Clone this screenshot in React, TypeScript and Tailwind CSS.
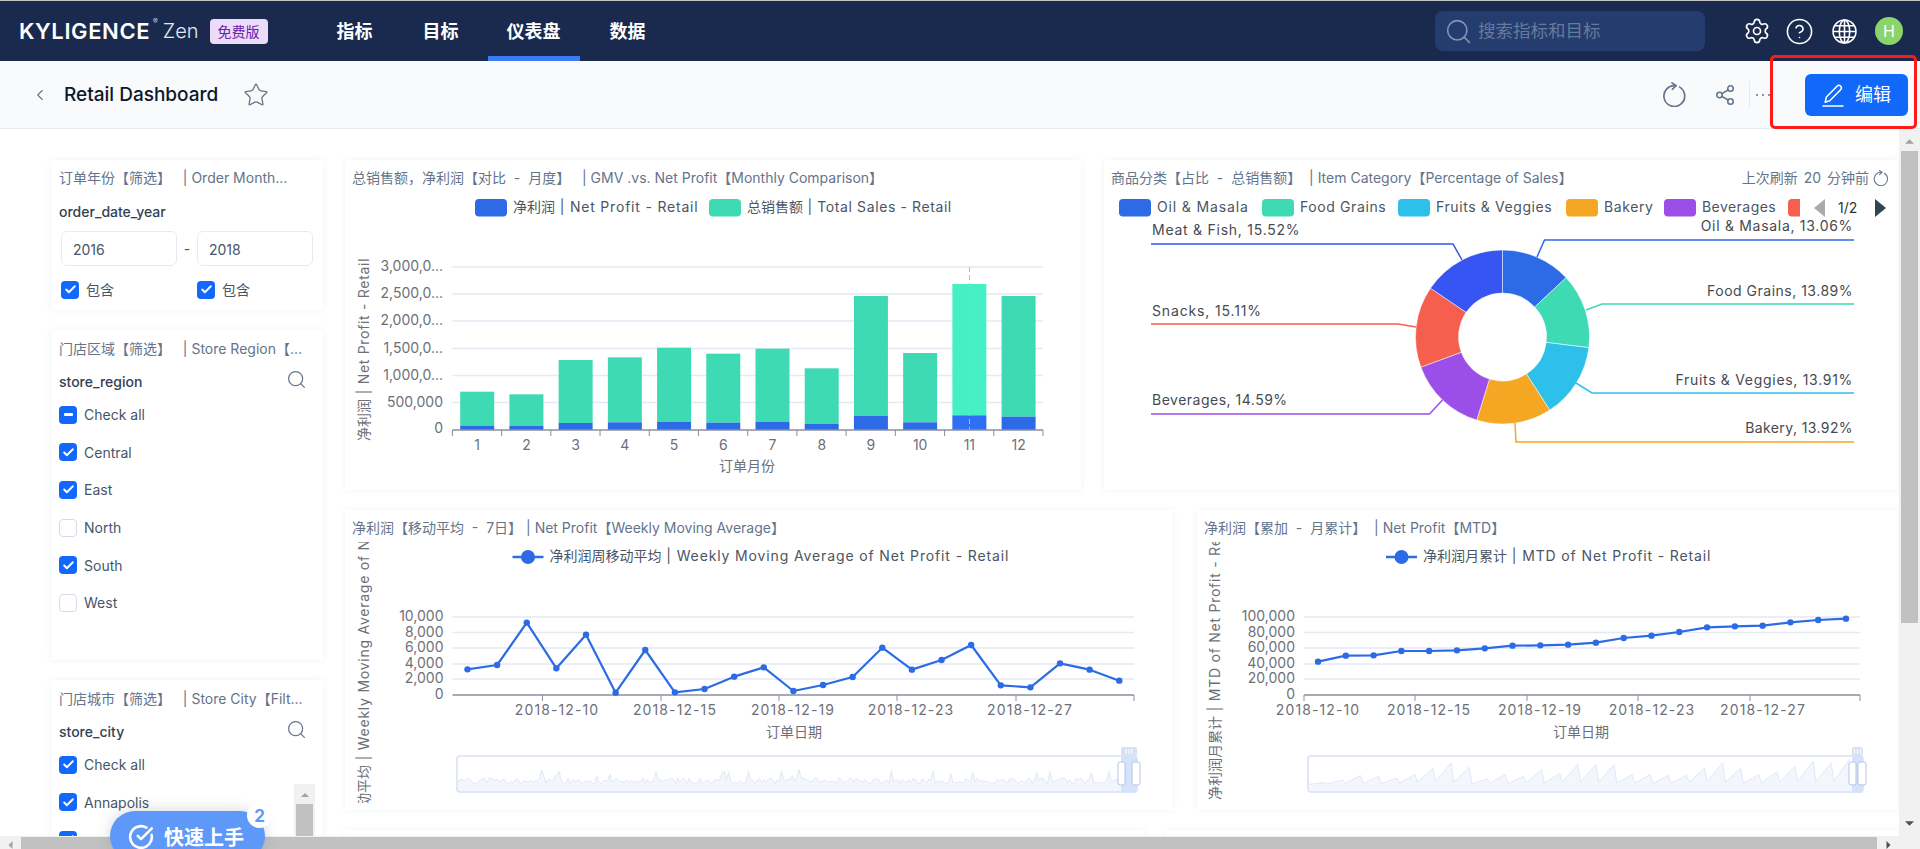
import React from "react";
import { Settings, CircleHelp, ChevronLeft, Star, Share2, Search, CircleCheckBig, Check } from "lucide-react";

const AXIS = "#6e7079";
const LEG = "#4b5563";
const NB = "\u00a0";

function Refresh({ className }: { className?: string }) {
  return (
    <svg viewBox="0 0 24 24" fill="none" stroke="currentColor" strokeWidth={1.6} strokeLinecap="round" strokeLinejoin="round" className={className}>
      <path d="M17 4.9A10 10 0 1 1 13.5 3.6" />
      <path d="M9.6 0.8 13.5 3.6 9.9 7" />
    </svg>
  );
}

function GlobeIcon({ className }: { className?: string }) {
  return (
    <svg viewBox="0 0 24 24" fill="none" stroke="currentColor" strokeWidth={1.5} className={className}>
      <circle cx="12" cy="12" r="11" />
      <ellipse cx="12" cy="12" rx="5" ry="11" />
      <path d="M12 1v22M1.2 12h21.6M2.8 6.5h18.4M2.8 17.5h18.4" />
    </svg>
  );
}

function PenIcon({ className }: { className?: string }) {
  return (
    <svg viewBox="0 0 22 24" fill="none" stroke="currentColor" strokeWidth={1.5} strokeLinejoin="round" strokeLinecap="round" className={className}>
      <path d="M1 23h20" />
      <path d="M3.2 19.2 4.4 14 15 3.2a2.5 2.5 0 0 1 3.6 3.5L8 17.6z" />
    </svg>
  );
}

function Box({ state = "on" }: { state?: "on" | "off" | "mid" }) {
  if (state === "off") return <span className="block h-[18px] w-[18px] rounded-[4px] border border-[#d5dce8] bg-white" />;
  return (
    <span className="flex h-[18px] w-[18px] items-center justify-center rounded-[4px] bg-[#1268fb]">
      {state === "on" ? <Check className="h-[13px] w-[13px] text-white" strokeWidth={3.5} /> : <span className="h-[3px] w-[9px] rounded-[1px] bg-white" />}
    </span>
  );
}

function Opt({ label, state }: { label?: string; state?: "on" | "off" | "mid" }) {
  return (
    <div className="flex h-[37.6px] items-center gap-[7px] text-[14px] text-[#475569]">
      <Box state={state} />
      {label && <span>{label}</span>}
    </div>
  );
}

function FilterHead({ title, field }: { title: string; field: string }) {
  return (
    <>
      <div className="h-5 whitespace-nowrap text-[14px] leading-5 text-[#64748b]">{title}</div>
      <div className="mt-[13px] flex h-5 items-center justify-between pr-[16px]">
        <span className="text-[14px] font-medium leading-5 text-[#334155]">{field}</span>
        <Search className="-mt-[6px] h-[21px] w-[21px] text-[#64748b]" strokeWidth={1.4} />
      </div>
    </>
  );
}

function Card({ className, children }: { className?: string; children?: React.ReactNode }) {
  return <div className={"bg-white shadow-[0_0_6px_rgba(100,116,139,0.09)] " + (className ?? "")}>{children}</div>;
}

function ChartTitle({ children, right }: { children: React.ReactNode; right?: React.ReactNode }) {
  return (
    <div className="flex h-5 items-center justify-between whitespace-nowrap pl-[7px] pr-[9px] text-[14px] leading-5 text-[#64748b]">
      <span>{children}</span>
      {right}
    </div>
  );
}

function Mixed({ t, ls }: { t: string; ls: number }) {
  return (
    <>
      {t.split(/([\u3000-\u9fff\uff00-\uffef]+)/).map((s, i) =>
        i % 2 === 1 ? <tspan key={i}>{s}</tspan> : <tspan key={i} letterSpacing={ls}>{s}</tspan>
      )}
    </>
  );
}

const zy = (z: number) => 155 + z / 3;
const tops = [710, 718, 615, 607, 578, 596, 581, 640, 423, 594, 387, 423];
const mids = [812, 813, 804, 802, 801, 803, 801, 806, 783, 802, 781, 785];

function Swatch({ x, c, w = 32 }: { x: number; c: string; w?: number }) {
  return <rect x={x} y={199} width={w} height={17.5} rx={4} fill={c} />;
}

function BarChart() {
  const gy = [267, 294, 321, 348.5, 375.5, 402.5];
  const labels = ["3,000,0...", "2,500,0...", "2,000,0...", "1,500,0...", "1,000,0...", "500,000"];
  const x0 = 452.4;
  const x1 = 1043;
  const pitch = (x1 - x0) / 12;
  return (
    <svg viewBox="345 188 736 302" className="block h-[302px] w-[736px]">
      <Swatch x={475} c="#2d6be6" />
      <text x={513} y={212} fontSize={14} fill={LEG}><Mixed t="净利润 | Net Profit - Retail" ls={0.8} /></text>
      <Swatch x={709} c="#3ddab4" />
      <text x={747} y={212} fontSize={14} fill={LEG}><Mixed t="总销售额 | Total Sales - Retail" ls={0.6} /></text>
      {gy.map((y, i) => (
        <g key={y}>
          <line x1={x0} x2={x1} y1={y} y2={y} stroke="#e4e9f4" strokeWidth={1.3} />
          <text x={443} y={y + 4} fontSize={14} fill={AXIS} textAnchor="end">{labels[i]}</text>
        </g>
      ))}
      <text x={443} y={433} fontSize={14} fill={AXIS} textAnchor="end">0</text>
      {tops.map((t, i) => {
        const x = x0 + pitch * i + 7.8;
        const hot = i === 10;
        return (
          <g key={i}>
            <rect x={x} y={zy(t)} width={34} height={zy(mids[i]) - zy(t)} fill={hot ? "#47f0c4" : "#3ddab4"} />
            <rect x={x} y={zy(mids[i])} width={34} height={430 - zy(mids[i])} fill={hot ? "#2f6ff5" : "#2d6be6"} />
            <text x={x + 17} y={450} fontSize={14} fill={AXIS} textAnchor="middle">{i + 1}</text>
          </g>
        );
      })}
      <line x1={969.5} x2={969.5} y1={267} y2={430} stroke="#b8bcc6" strokeDasharray="5 3" />
      <line x1={x0} x2={x1} y1={430} y2={430} stroke="#8a8f9c" strokeWidth={1.5} />
      {Array.from({ length: 13 }).map((_, i) => (
        <line key={i} x1={x0 + pitch * i} x2={x0 + pitch * i} y1={430} y2={436} stroke="#8a8f9c" />
      ))}
      <text x={747} y={471} fontSize={14} fill={AXIS} textAnchor="middle">订单月份</text>
      <text transform="translate(369 441) rotate(-90)" fontSize={14} fill={AXIS}><Mixed t="净利润 | Net Profit - Retail" ls={0.7} /></text>
    </svg>
  );
}

const R = 87;
const r = 44;
const cx = 1502.5;
const cy = 337;
const slices: [number, string][] = [
  [13.06, "#2d6be6"],
  [13.89, "#3ddab4"],
  [13.91, "#2dc0ea"],
  [13.92, "#f5a623"],
  [14.59, "#9b4fe8"],
  [15.11, "#f65f4e"],
  [15.52, "#3755f2"],
];

function arc(a0: number, a1: number) {
  const p = (rad: number, a: number) => `${cx + rad * Math.sin(a)} ${cy - rad * Math.cos(a)}`;
  return `M${p(r, a0)} L${p(R, a0)} A${R} ${R} 0 0 1 ${p(R, a1)} L${p(r, a1)} A${r} ${r} 0 0 0 ${p(r, a0)} Z`;
}

function PieLabel({ t, x, y, anchor, c, pts, ls = 0.7 }: { t: string; x: number; y: number; anchor: "start" | "end"; c: string; pts: string; ls?: number }) {
  return (
    <g>
      <text x={x} y={y + 5} fontSize={14} letterSpacing={ls} fill="#464a52" textAnchor={anchor}>{t}</text>
      <polyline points={pts} fill="none" stroke={c} strokeWidth={1.5} />
    </g>
  );
}

function PieChart() {
  let acc = 0;
  return (
    <svg viewBox="1104 188 794 302" className="block h-[302px] w-[794px]">
      <Swatch x={1119} c="#2d6be6" />
      <text x={1157} y={212} fontSize={14} letterSpacing={0.85} fill={LEG}>Oil &amp; Masala</text>
      <Swatch x={1262} c="#3ddab4" />
      <text x={1300} y={212} fontSize={14} letterSpacing={0.6} fill={LEG}>Food Grains</text>
      <Swatch x={1398} c="#2dc0ea" />
      <text x={1436} y={212} fontSize={14} letterSpacing={0.6} fill={LEG}>Fruits &amp; Veggies</text>
      <Swatch x={1566} c="#f5a623" />
      <text x={1604} y={212} fontSize={14} letterSpacing={0.6} fill={LEG}>Bakery</text>
      <Swatch x={1664} c="#9b4fe8" />
      <text x={1702} y={212} fontSize={14} letterSpacing={0.45} fill={LEG}>Beverages</text>
      <path d="M1800 199h-8a4 4 0 0 0-4 4v9.5a4 4 0 0 0 4 4h8z" fill="#f65f4e" />
      <polygon points="1825,199 1825,217 1814,208" fill="#aaaaaa" />
      <text x={1838} y={213} fontSize={14} fill="#333">1/2</text>
      <polygon points="1875,199 1875,217 1886,208" fill="#2f4554" />
      {slices.map(([v, c]) => {
        const a0 = (acc / 100) * 2 * Math.PI;
        acc += v;
        const a1 = (acc / 100) * 2 * Math.PI;
        return <path key={c} d={arc(a0, a1)} fill={c} stroke="#ffffff" strokeWidth={0.5} />;
      })}
      <PieLabel t="Oil & Masala, 13.06%" x={1853} y={226} anchor="end" c="#2d6be6" pts="1537,257 1544.5,240 1854,240" />
      <PieLabel t="Food Grains, 13.89%" x={1853} y={291} anchor="end" c="#3ddab4" pts="1586,310 1602,304 1854,304" ls={0.5} />
      <PieLabel t="Fruits & Veggies, 13.91%" x={1853} y={380} anchor="end" c="#2dc0ea" pts="1576,383 1592,393 1854,393" />
      <PieLabel t="Bakery, 13.92%" x={1853} y={428} anchor="end" c="#f5a623" pts="1515,423 1516,442 1854,442" ls={0.4} />
      <PieLabel t="Beverages, 14.59%" x={1152} y={400} anchor="start" c="#9b4fe8" pts="1442.5,400 1429.5,414 1151,414" ls={0.5} />
      <PieLabel t="Snacks, 15.11%" x={1152} y={311} anchor="start" c="#f65f4e" pts="1416,327 1398,324 1151,324" ls={0.85} />
      <PieLabel t="Meat & Fish, 15.52%" x={1152} y={230} anchor="start" c="#3755f2" pts="1462,260 1453,244 1151,244" ls={0.75} />
    </svg>
  );
}

function noisy(x0: number, x1: number) {
  let s = 17;
  const rnd = () => {
    s = (s * 16807) % 2147483647;
    return s / 2147483647;
  };
  const out: string[] = [];
  for (let x = x0; x < x1; x += 2.2) {
    const u = rnd();
    const h = u > 0.94 ? 8 + rnd() * 8 : 1 + rnd() * 6;
    out.push(`${x.toFixed(1)} ${(785 - h).toFixed(1)}`);
  }
  return out;
}

function saw(x0: number, x1: number) {
  const peaks = [6, 9, 14, 13, 11, 15, 22, 28, 23, 10, 15, 13, 20, 16, 26, 26, 26, 15, 15, 14, 14, 22, 28, 22, 15, 18, 24, 30, 28, 32];
  const step = (x1 - x0) / peaks.length;
  const out: string[] = [];
  peaks.forEach((p, i) => {
    out.push(`${(x0 + i * step).toFixed(1)} ${786 - p * 0.12 - 1}`);
    out.push(`${(x0 + (i + 0.85) * step).toFixed(1)} ${790 - p * 0.9 - 2}`);
  });
  return out;
}

function Zoomer({ x0, x1, b0, b1, h0, h1, pts }: { x0: number; x1: number; b0: number; b1: number; h0: number; h1: number; pts: string[] }) {
  return (
    <g>
      <path d={`M${x0} 791 L${pts.join(" L")} L${b0} 791 Z`} fill="#f3f6fc" stroke="none" />
      <polyline points={pts.join(" ")} fill="none" stroke="#e2e8f6" />
      <rect x={x0} y={756} width={x1 - x0} height={36} rx={3} fill="none" stroke="#d8e1f2" strokeWidth={1.5} />
      <rect x={b0} y={756} width={b1 - b0} height={36.5} fill="#d4e2fb" />
      <rect x={b0} y={747} width={b1 - b0} height={9} rx={2} fill="#d8e1f2" />
      <path d={`M${(b0 + b1) / 2 - 3} 749v5M${(b0 + b1) / 2} 749v5M${(b0 + b1) / 2 + 3} 749v5`} stroke="#ffffff" />
      <rect x={h0} y={762} width={7} height={23} rx={2} fill="#fff" stroke="#b7c3de" />
      <rect x={h1} y={762} width={8} height={23} rx={2} fill="#fff" stroke="#b7c3de" />
    </g>
  );
}

function LineChart(props: {
  vb: string;
  w: string;
  gridX: [number, number];
  legX: number;
  legend: string;
  yLabels: string[];
  points: [number, number][];
  ticks: number[];
  labelsX: number[];
  nameX: number;
  yName: string;
  yNameX: number;
  yNameStart: number;
  clip: string;
  zoom: { x0: number; x1: number; b0: number; b1: number; h0: number; h1: number; pts: string[] };
}) {
  const { gridX, legX, points } = props;
  const gy = [617, 632.5, 648, 664, 679];
  return (
    <svg viewBox={props.vb} className={"block h-[272px] " + props.w}>
      <defs>
        <clipPath id={props.clip}>
          <rect x={props.yNameX - 15} y={542} width={24} height={261} />
        </clipPath>
      </defs>
      <line x1={legX} x2={legX + 31} y1={557} y2={557} stroke="#2d6be6" strokeWidth={2.5} />
      <circle cx={legX + 15.5} cy={557} r={7} fill="#2d6be6" />
      <text x={legX + 37} y={561} fontSize={14} fill={LEG}><Mixed t={props.legend} ls={0.87} /></text>
      <g clipPath={`url(#${props.clip})`}>
        <text transform={`translate(${props.yNameX} ${props.yNameStart}) rotate(-90)`} fontSize={14} fill={AXIS}><Mixed t={props.yName} ls={0.75} /></text>
      </g>
      {gy.map((y, i) => (
        <g key={y}>
          <line x1={gridX[0]} x2={gridX[1]} y1={y} y2={y} stroke="#e4e9f4" strokeWidth={1.3} />
          <text x={gridX[0] - 9} y={y + 4} fontSize={14} fill={AXIS} textAnchor="end">{props.yLabels[i]}</text>
        </g>
      ))}
      <text x={gridX[0] - 9} y={698.5} fontSize={14} fill={AXIS} textAnchor="end">0</text>
      <line x1={gridX[0]} x2={gridX[1]} y1={695} y2={695} stroke="#8a8f9c" strokeWidth={1.5} />
      {props.ticks.map((x) => (
        <line key={x} x1={x} x2={x} y1={695} y2={701} stroke="#8a8f9c" />
      ))}
      {props.labelsX.map((x, i) => (
        <text key={x} x={x} y={715} fontSize={14} letterSpacing={1.1} fill={AXIS} textAnchor="middle">
          {["2018-12-10", "2018-12-15", "2018-12-19", "2018-12-23", "2018-12-27"][i]}
        </text>
      ))}
      <text x={props.nameX} y={737} fontSize={14} fill={AXIS} textAnchor="middle">订单日期</text>
      <polyline points={points.map((p) => p.join(",")).join(" ")} fill="none" stroke="#2d6be6" strokeWidth={2.2} strokeLinejoin="round" />
      {points.map(([x, y]) => (
        <circle key={x} cx={x} cy={y} r={3.2} fill="#2d6be6" />
      ))}
      <Zoomer {...props.zoom} />
    </svg>
  );
}

const l1 = [508, 495, 368, 505, 404, 578, 450, 577, 567, 530, 502, 573, 555, 531, 443, 509, 480, 435, 556, 562, 490, 509, 542];
const l2 = [485, 467, 466, 453, 453, 451, 445, 437, 436, 434, 428, 414, 407, 396, 382, 379, 377, 367, 360, 356];
const pts1: [number, number][] = l1.map((z, i) => [467.5 + (i * 651.8) / 22, 500 + z / 3]);
const pts2: [number, number][] = l2.map((z, i) => [1318 + (i * 528) / 19, 500 + z / 3]);

export default function App() {
  return (
    <div className="relative flex h-screen w-screen flex-col overflow-hidden border-t border-[#c4c4c4] bg-white font-[family-name:Inter,'Noto_Sans_CJK_SC',sans-serif]">
      {/* top bar */}
      <header className="flex h-[60px] shrink-0 items-center bg-[#1a2a4e]">
        <div className="ml-[19px] w-[133px] whitespace-nowrap text-[22px] font-semibold tracking-[0.6px] text-white">KYLIGENCE</div>
        <sup className="-mt-[12px] ml-[1px] text-[7px] text-[#cbd5e1]">®</sup>
        <span className="ml-[5px] text-[20px] font-light text-[#e2e8f0]">Zen</span>
        <span className="ml-[11px] flex h-[25px] w-[58px] items-center justify-center rounded-[4px] bg-[#ecdcf9] text-[14px] text-[#6b21a8]">免费版</span>
        <nav className="ml-[69px] flex h-full text-[18px] font-bold text-white">
          <span className="flex w-[36px] items-center">指标</span>
          <span className="ml-[50px] flex w-[36px] items-center">目标</span>
          <span className="ml-[29px] flex w-[92px] items-center justify-center border-b-[5px] border-[#3b7bf6] pt-[5px]">仪表盘</span>
          <span className="ml-[30px] flex w-[36px] items-center">数据</span>
        </nav>
        <div className="ml-auto flex h-[40px] w-[270px] items-center gap-[5px] rounded-[8px] bg-[#253d6e] pl-[9px] text-[17.5px] text-[#667a9c]">
          <Search className="h-[29px] w-[29px] text-[#8596b3]" strokeWidth={1.3} />
          <span>搜索指标和目标</span>
        </div>
        <div className="ml-[38px] mr-[17px] flex items-center text-white">
          <Settings className="h-[28px] w-[28px]" strokeWidth={1.4} />
          <CircleHelp className="ml-[13.5px] h-[29px] w-[29px]" strokeWidth={1.3} />
          <GlobeIcon className="ml-[18px] h-[25px] w-[25px]" />
          <span className="ml-[18.5px] flex h-[28px] w-[28px] items-center justify-center rounded-full bg-[#8bd46b] text-[16px]">H</span>
        </div>
      </header>

      {/* sub header */}
      <div className="flex h-[68px] shrink-0 items-center border-b border-[#e5eaf0] bg-[#f8fafc]">
        <ChevronLeft className="ml-[31px] h-[18px] w-[18px] text-[#64748b]" strokeWidth={1.5} />
        <span className="ml-[15px] pt-[2px] text-[19px] font-medium text-[#0f172a]">Retail Dashboard</span>
        <Star className="ml-[25px] h-[26px] w-[26px] text-[#64748b]" strokeWidth={1.2} />
        <Refresh className="ml-auto h-[25px] w-[25px] text-[#64748b]" />
        <Share2 className="ml-[27px] h-[22px] w-[22px] text-[#64748b]" strokeWidth={1.7} />
        <span className="ml-[13px] h-[27px] w-px bg-[#e5eaf3]" />
        <span className="ml-[6px] flex gap-[4px]">
          <i className="h-[2px] w-[2px] rounded-full bg-[#64748b]" />
          <i className="h-[2px] w-[2px] rounded-full bg-[#64748b]" />
          <i className="h-[2px] w-[2px] rounded-full bg-[#64748b]" />
        </span>
        <button className="ml-[35px] mr-[12px] flex h-[42px] w-[103px] items-center justify-center gap-[11px] rounded-[6px] bg-[#1268fb] text-[18px] text-white">
          <PenIcon className="h-[24px] w-[22px]" />
          <span>编辑</span>
        </button>
      </div>

      {/* body */}
      <div className="flex min-h-0 flex-1">
        <main className="flex min-w-0 flex-1 overflow-hidden pl-[51px] pt-[31px]">
          <div className="flex w-[272px] shrink-0 flex-col gap-[20px]">
            <Card className="h-[150px] shrink-0 pl-2 pt-2">
              <div className="h-5 text-[14px] leading-5 text-[#64748b]">{`订单年份【筛选】${NB}${NB}${NB}| Order Month...`}</div>
              <div className="mt-[14px] h-5 text-[14px] font-medium leading-5 text-[#334155]">order_date_year</div>
              <div className="ml-[2px] mt-[9px] flex items-center text-[14px] text-[#475569]">
                <span className="flex h-[35px] w-[116px] items-center rounded-[6px] border border-[#e5eaf5] pl-[11px] pt-[2px]">2016</span>
                <span className="w-[20px] text-center">-</span>
                <span className="flex h-[35px] w-[116px] items-center rounded-[6px] border border-[#e5eaf5] pl-[11px] pt-[2px]">2018</span>
              </div>
              <div className="ml-[2px] mt-[13px] flex text-[14px] text-[#475569]">
                <span className="flex w-[136px] items-center gap-[7px]"><Box />包含</span>
                <span className="flex items-center gap-[7px]"><Box />包含</span>
              </div>
            </Card>
            <Card className="h-[330px] shrink-0 pl-2 pt-[9px]">
              <FilterHead title={`门店区域【筛选】${NB}${NB}${NB}| Store Region【...`} field="store_region" />
              <div className="mt-[4px]">
                <Opt label="Check all" state="mid" />
                <Opt label="Central" />
                <Opt label="East" />
                <Opt label="North" state="off" />
                <Opt label="South" />
                <Opt label="West" state="off" />
              </div>
            </Card>
            <Card className="h-[300px] shrink-0 pl-2 pt-[9px]">
              <FilterHead title={`门店城市【筛选】${NB}${NB}${NB}| Store City【Filt...`} field="store_city" />
              <div className="mt-[4px]">
                <Opt label="Check all" />
              </div>
              <div className="flex">
                <div className="flex-1">
                  <Opt label="Annapolis" />
                  <Opt />
                </div>
                <div className="mr-2 flex h-[60px] w-[21px] flex-col items-center bg-[#f1f1f1] pt-[9px]">
                  <svg viewBox="0 0 10 5" className="h-[5px] w-[10px]"><polygon points="5,0 10,5 0,5" fill="#a3a3a3" /></svg>
                  <div className="mt-[7px] h-[50px] w-[17px] bg-[#c1c1c1]" />
                </div>
              </div>
            </Card>
          </div>

          <div className="ml-[22px] flex w-[1553px] shrink-0 flex-col gap-[20px]">
            <div className="flex gap-[23px]">
              <Card className="h-[330px] w-[736px] pt-2">
                <ChartTitle>{`总销售额，净利润【对比${NB} - ${NB}月度】${NB}${NB}${NB}| GMV .vs. Net Profit【Monthly Comparison】`}</ChartTitle>
                <BarChart />
              </Card>
              <Card className="h-[330px] w-[794px] pt-2">
                <ChartTitle
                  right={
                    <span className="flex items-center gap-[4px] [word-spacing:2px]">
                      上次刷新 20 分钟前
                      <Refresh className="h-[16px] w-[16px] text-[#64748b]" />
                    </span>
                  }
                >
                  {`商品分类【占比${NB} - ${NB}总销售额】${NB}${NB}| Item Category【Percentage of Sales】`}
                </ChartTitle>
                <PieChart />
              </Card>
            </div>
            <div className="flex gap-[24px]">
              <Card className="h-[300px] w-[828px] pt-2">
                <ChartTitle>{`净利润【移动平均${NB} - ${NB}7日】${NB}| Net Profit【Weekly Moving Average】`}</ChartTitle>
                <LineChart
                  vb="345 538 828 272"
                  w="w-[828px]"
                  gridX={[452.5, 1134]}
                  legX={512.5}
                  legend="净利润周移动平均 | Weekly Moving Average of Net Profit - Retail"
                  yLabels={["10,000", "8,000", "6,000", "4,000", "2,000"]}
                  points={pts1}
                  ticks={[542.5, 661, 779, 897, 1016, 1134]}
                  labelsX={[557, 675, 793, 911, 1030]}
                  nameX={794}
                  yName="净利润周移动平均 | Weekly Moving Average of Net Profit - Retail"
                  yNameX={369}
                  yNameStart={877}
                  clip="c1"
                  zoom={{ x0: 457, x1: 1137, b0: 1121, b1: 1137, h0: 1118, h1: 1132, pts: noisy(458, 1121) }}
                />
              </Card>
              <Card className="h-[300px] w-[701px] pt-2">
                <ChartTitle>{`净利润【累加${NB} - ${NB}月累计】${NB}${NB}| Net Profit【MTD】`}</ChartTitle>
                <LineChart
                  vb="1197 538 701 272"
                  w="w-[701px]"
                  gridX={[1304, 1860]}
                  legX={1386}
                  legend="净利润月累计 | MTD of Net Profit - Retail"
                  yLabels={["100,000", "80,000", "60,000", "40,000", "20,000"]}
                  points={pts2}
                  ticks={[1304, 1415, 1527, 1638, 1750, 1860]}
                  labelsX={[1318, 1429, 1540, 1652, 1763]}
                  nameX={1581}
                  yName="净利润月累计 | MTD of Net Profit - Retail"
                  yNameX={1220}
                  yNameStart={800}
                  clip="c2"
                  zoom={{ x0: 1308, x1: 1863, b0: 1852, b1: 1863, h0: 1849, h1: 1858, pts: saw(1309, 1852) }}
                />
              </Card>
            </div>
            <div className="flex gap-[21px]">
              <Card className="h-[120px] w-[799px]" />
              <Card className="h-[120px] w-[733px]" />
            </div>
          </div>
        </main>
        {/* vertical scrollbar */}
        <div className="flex w-[21px] shrink-0 flex-col items-center bg-[#f1f1f1] pt-[10px]">
          <svg viewBox="0 0 10 5" className="h-[5px] w-[9px]"><polygon points="5,0 10,5 0,5" fill="#a3a3a3" /></svg>
          <div className="mt-[7px] h-[472px] w-[17px] bg-[#c1c1c1]" />
          <svg viewBox="0 0 10 5" className="mb-[10px] mt-auto h-[5px] w-[9px]"><polygon points="0,0 10,0 5,5" fill="#505050" /></svg>
        </div>
      </div>

      {/* horizontal scrollbar */}
      <div className="flex h-[13px] shrink-0 items-end bg-[#f1f1f1]">
        <svg viewBox="0 0 5 10" className="mb-0 ml-[8px] h-[8px] w-[5px]"><polygon points="5,0 5,10 0,5" fill="#a3a3a3" /></svg>
        <div className="ml-[8px] h-[12px] w-[1856px] bg-[#c1c1c1]" />
        <svg viewBox="0 0 5 10" className="ml-[9px] h-[8px] w-[5px]"><polygon points="0,0 0,10 5,5" fill="#505050" /></svg>
      </div>

      {/* overlays */}
      <div className="pointer-events-none absolute left-[1770px] top-[54px] h-[74px] w-[147px] rounded-[5px] border-[3px] border-[#ff1a1a]" />
      <div className="absolute left-[110px] top-[810px] flex h-[50px] w-[155px] items-start rounded-full bg-[#5e98f8] pl-[18px] pt-[13px] text-[20px] font-bold leading-[28px] text-white shadow-[0_0_14px_rgba(100,116,139,0.3)]">
        <CircleCheckBig className="h-[26px] w-[26px]" strokeWidth={2.4} />
        <span className="ml-[10px]">快速上手</span>
        <span className="absolute -right-[7px] -top-[8px] flex h-[25px] w-[25px] items-center justify-center rounded-full bg-white text-[17px] font-bold text-[#5e98f8]">2</span>
      </div>
    </div>
  );
}
